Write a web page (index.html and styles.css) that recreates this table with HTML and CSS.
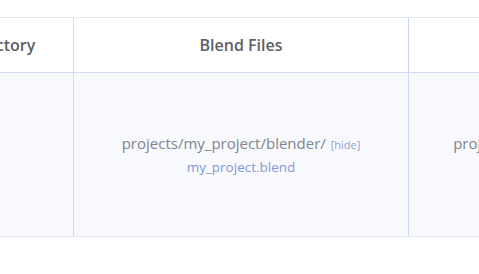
FILE: index.html
```html
<!DOCTYPE html>
<html>
<head>
<meta charset="utf-8">
<link rel="stylesheet" href="styles.css">
</head>
<body>
<div class="viewport">
  <table class="files">
    <thead>
      <tr>
        <th class="col1">Project Directory</th>
        <th class="col2">Blend Files</th>
        <th class="col3">Output Directory</th>
      </tr>
    </thead>
    <tbody>
      <tr>
        <td class="col1"></td>
        <td class="col2">
          <div class="path">projects/my_project/blender/ <a class="hide">[hide]</a></div>
          <div class="file">my_project.blend</div>
        </td>
        <td class="col3">
          <div class="path">projects/my_project/output/ <a class="hide">[hide]</a></div>
          <div class="file">my_project_0001.png</div>
        </td>
      </tr>
    </tbody>
  </table>
</div>
</body>
</html>
```
FILE: styles.css
```css
html, body {
  margin: 0;
  padding: 0;
  background: #ffffff;
}
body {
  font-family: "Open Sans", "DejaVu Sans", sans-serif;
  width: 479px;
  height: 274px;
  overflow: hidden;
}
.viewport {
  overflow: hidden;
  padding-top: 17px;
  width: 479px;
}
.files {
  border-collapse: collapse;
  table-layout: fixed;
  margin-left: -133px;
  width: 862px;
}
.files th, .files td {
  padding: 0;
  text-align: center;
  vertical-align: middle;
}
.files th {
  height: 54px;
  font-size: 16px;
  font-weight: 600;
  color: #5c6067;
  border-top: 1px solid #e3e9f5;
  border-bottom: 1px solid #cfdcf3;
  background: #ffffff;
}
.files td {
  height: 163px;
  background: #f8f9fd;
  border-bottom: 1px solid #e3e9f5;
}
.col1 { width: 206px; }
.col2 { width: 334px; }
.col3 { width: 320px; }
.files .col2 {
  border-left: 1px solid #cdd9f1;
  border-right: 1px solid #cdd9f1;
}
.path {
  font-size: 15px;
  line-height: 22px;
  color: #80858d;
}
.hide {
  font-size: 11px;
  color: #8d9fd6;
  cursor: pointer;
  margin-left: 1px;
}
.file {
  font-size: 13.5px;
  line-height: 22px;
  color: #7f98da;
}
```
